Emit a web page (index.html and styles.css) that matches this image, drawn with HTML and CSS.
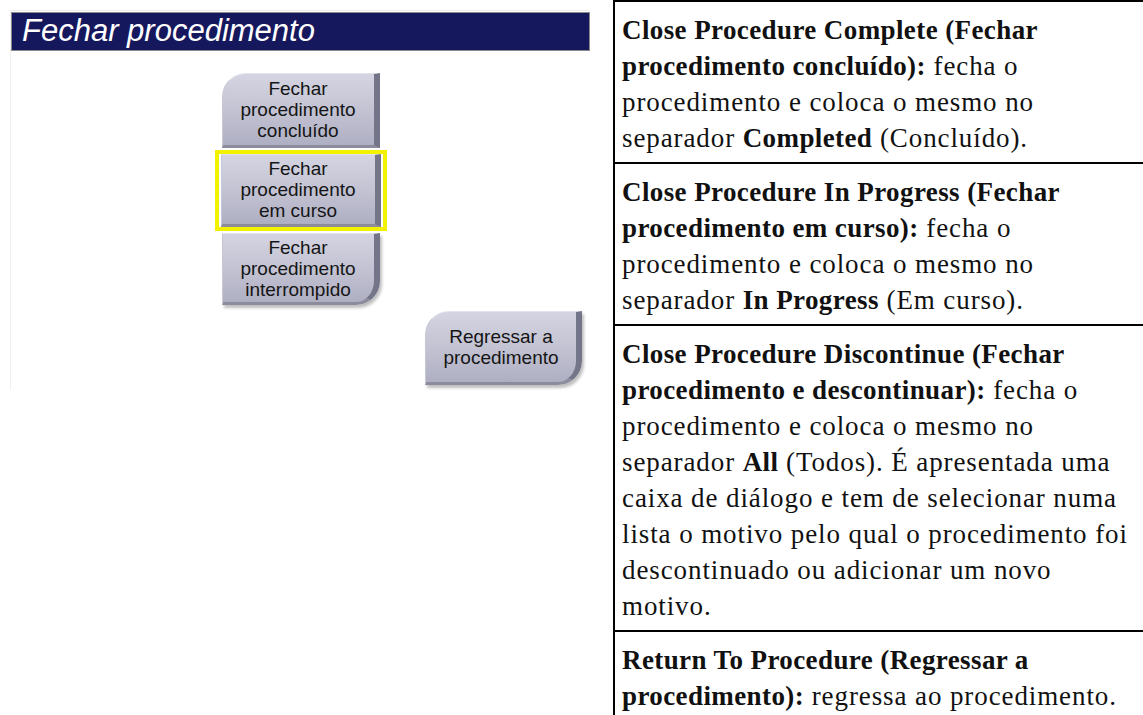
FILE: index.html
```html
<html>
<head>
    <meta charset="utf-8">
    <title>Fechar procedimento</title>
    <link rel="stylesheet" href="styles.css">
</head>
<body>
    <div class="page">
        <div class="screen">
            <div class="panel">
                <div class="titlebar">Fechar procedimento</div>
                <div class="stack">
                    <div class="btn top">Fechar<br>procedimento<br>conclu&iacute;do</div>
                    <div class="selected">
                        <div class="btn">Fechar<br>procedimento<br>em curso</div>
                    </div>
                    <div class="btn bottom">Fechar<br>procedimento<br>interrompido</div>
                </div>
                <div class="back">
                    <div class="btn top bottom">Regressar a<br>procedimento</div>
                </div>
            </div>
        </div>

        <table class="desc">
            <tr>
                <td><b>Close Procedure Complete (Fechar<br>procedimento conclu&iacute;do):</b> fecha o<br>procedimento e coloca o mesmo no<br>separador <b>Completed</b> (Conclu&iacute;do).</td>
            </tr>
            <tr>
                <td><b>Close Procedure In Progress (Fechar<br>procedimento em curso):</b> fecha o<br>procedimento e coloca o mesmo no<br>separador <b>In Progress</b> (Em curso).</td>
            </tr>
            <tr>
                <td><b>Close Procedure Discontinue (Fechar<br>procedimento e descontinuar):</b> fecha o<br>procedimento e coloca o mesmo no<br>separador <b>All</b> (Todos). &Eacute; apresentada uma<br>caixa de di&aacute;logo e tem de selecionar numa<br>lista o motivo pelo qual o procedimento foi<br>descontinuado ou adicionar um novo<br>motivo.</td>
            </tr>
            <tr>
                <td><b>Return To Procedure (Regressar a<br>procedimento):</b> regressa ao procedimento.</td>
            </tr>
        </table>
    </div>
</body>
</html>
```

FILE: styles.css
```css
* {box-sizing:border-box;}
html, body {margin:0;padding:0;background:#fff;overflow:hidden;}
.page {display:flex;align-items:flex-start;width:1143px;height:715px;overflow:hidden;}

.screen {width:613px;flex:none;padding:10px 23px 0 10px;}
.panel {border-top:1px solid #ececec;border-left:1px solid #f0f0f0;height:380px;padding-top:1px;}
.titlebar {height:39px;background:#16185e;border:1px solid #8a8a8a;color:#fff;font-family:"Liberation Sans", Arial, sans-serif;font-style:italic;font-size:31px;line-height:36px;padding-left:10px;}

.stack {display:flex;flex-direction:column;align-items:center;margin-top:22px;gap:2px;}
.selected {border:4px solid #f2f200;padding:0 2px;}
.back {display:flex;justify-content:flex-end;padding-right:8px;margin-top:6px;}

.btn {width:158px;height:75px;display:flex;align-items:center;justify-content:center;text-align:center;
      font-family:"Liberation Sans", Arial, sans-serif;font-size:19px;line-height:21px;color:#151515;
      background:linear-gradient(to bottom, #d4d4e2 0%, #c3c3d3 50%, #afafc3 100%);
      border-right:6px solid #75758a;border-bottom:3px solid #8c8c9c;border-top:1px solid #e2e2ec;border-left:1px solid #c8c8d6;}
.selected .btn {width:160px;height:73px;}
.btn.top {border-top-left-radius:24px;}
.btn.bottom {height:72px;border-bottom-right-radius:24px;box-shadow:2px 3px 3px rgba(0,0,0,0.25);}
.back .btn {width:157px;height:74px;}

.desc {border-collapse:collapse;width:540px;flex:none;font-family:"Liberation Serif", "Times New Roman", serif;font-size:27px;line-height:36px;color:#111;letter-spacing:0.9px;}
.desc td {border:2px solid #000;padding:10px 10px 6px 7px;vertical-align:top;white-space:nowrap;}
.desc b {letter-spacing:0.4px;}
```
